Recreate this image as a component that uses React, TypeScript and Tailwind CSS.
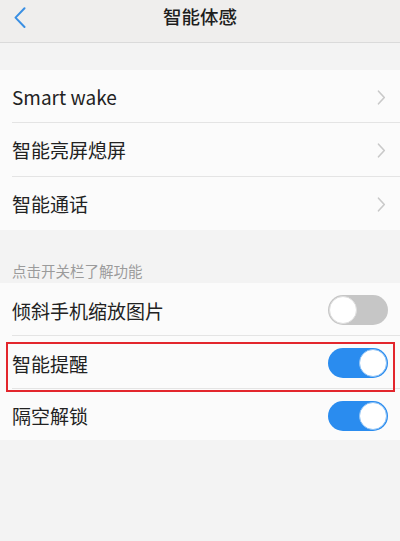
const font = { fontFamily: '"Noto Sans CJK SC", "Noto Sans", sans-serif' }

function Toggle({ on }: { on: boolean }) {
  return (
    <div
      className={`w-[60px] h-[30px] rounded-full p-[1px] flex items-center ${
        on ? 'bg-[#2a8cef] justify-end' : 'bg-[#c6c6c6] justify-start'
      }`}
    >
      <div
        className={`w-[28px] h-[28px] rounded-full bg-white border ${
          on ? 'border-[#8cc1f5]' : 'border-[#dedede]'
        }`}
      />
    </div>
  )
}

function Chevron() {
  return (
    <svg width="9" height="15" viewBox="0 0 9 15" fill="none" className="mr-[2px]">
      <polyline points="1.5,1.2 7.3,7.5 1.5,13.8" stroke="#c9c9c9" strokeWidth="1.6" strokeLinecap="round" strokeLinejoin="round" />
    </svg>
  )
}

function LinkRow({ label, h = 'h-[53px]', last }: { label: string; h?: string; last?: boolean }) {
  return (
    <div className="pl-3">
      <div
        className={`${h} flex items-center justify-between pr-3 pt-[2px] ${
          last ? '' : 'border-b border-[#e4e4e4]'
        }`}
      >
        <span className="text-[19px] text-[#222]">{label}</span>
        <Chevron />
      </div>
    </div>
  )
}

function SwitchRow({
  label,
  on,
  last,
  marked,
}: {
  label: string
  on: boolean
  last?: boolean
  marked?: boolean
}) {
  return (
    <div className="relative pl-3">
      <div
        className={`${last ? 'h-[51px]' : 'h-[53px] border-b border-[#e4e4e4]'} flex items-center justify-between pr-3`}
      >
        <span className="text-[19px] text-[#222] pt-[4px]">{label}</span>
        <div className="pt-[2px]">
          <Toggle on={on} />
        </div>
      </div>
      {marked && (
        <div className="absolute left-[6px] right-[5px] top-[6px] h-[50px] border-2 border-[#e3262d]" />
      )}
    </div>
  )
}

export default function App() {
  return (
    <div className="w-[400px] h-[541px] bg-[#f3f3f3] overflow-hidden" style={font}>
      {/* Header */}
      <div className="relative h-[43px] bg-[#efeeed] border-b border-[#dadada] flex items-center justify-center">
        <svg
          width="14"
          height="22"
          viewBox="0 0 14 22"
          fill="none"
          className="absolute left-[13px] top-[7px]"
        >
          <polyline
            points="11.5,1.2 2.5,10.6 11.5,20"
            stroke="#3a8fe3"
            strokeWidth="2"
            strokeLinecap="round"
            strokeLinejoin="round"
          />
        </svg>
        <h1 className="text-[18.5px] font-medium text-[#1e1e1e] -mt-[8px]">智能体感</h1>
      </div>

      <div className="h-[27px]" />

      <div className="bg-[#fbfbfb]">
        <LinkRow label="Smart wake" />
        <LinkRow label="智能亮屏熄屏" h="h-[54px]" />
        <LinkRow label="智能通话" last />
      </div>

      <div className="h-[53px] flex items-end px-3">
        <span className="text-[14.5px] text-[#9b9b9b] leading-[22px] mb-[1px]">点击开关栏了解功能</span>
      </div>

      <div className="bg-[#fbfbfb]">
        <SwitchRow label="倾斜手机缩放图片" on={false} />
        <SwitchRow label="智能提醒" on marked />
        <SwitchRow label="隔空解锁" on last />
      </div>
    </div>
  )
}
